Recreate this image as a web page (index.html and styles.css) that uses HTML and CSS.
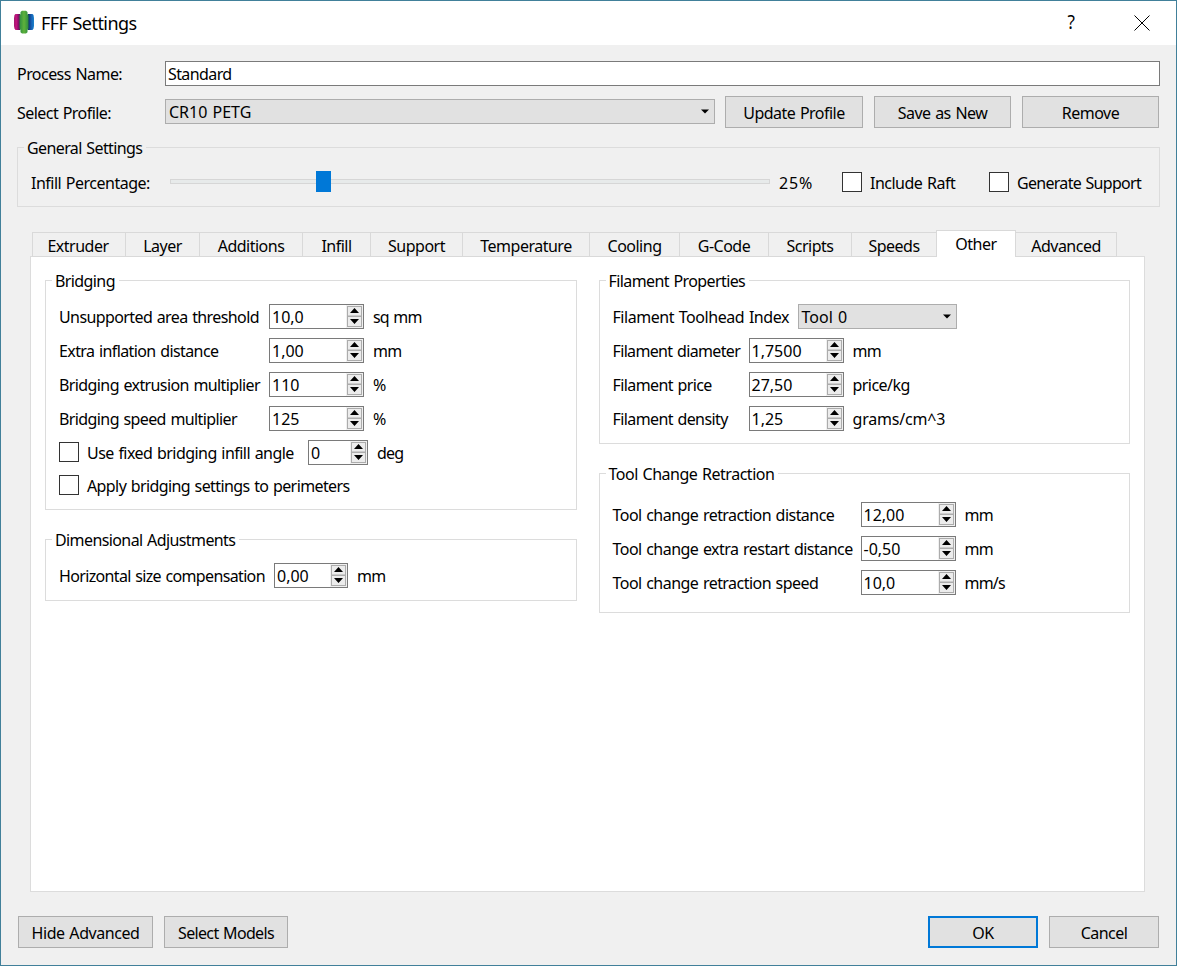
FILE: index.html
```html
<!DOCTYPE html>
<html lang="en">
<head>
<meta charset="utf-8">
<title>FFF Settings</title>
<link rel="stylesheet" href="styles.css">
</head>
<body>
<svg width="0" height="0" class="defs" aria-hidden="true">
  <symbol id="spin" viewBox="0 0 17 23">
    <rect width="17" height="23" fill="#f0f0f0"/>
    <rect x="1.5" y="1.5" width="14" height="9.5" fill="#ececec" stroke="#acacac"/>
    <rect x="1.5" y="11.5" width="14" height="10" fill="#ececec" stroke="#acacac"/>
    <path d="M4 8 L8.5 3 L13 8 Z M4 14 H13 L8.5 19 Z" fill="#000"/>
  </symbol>
  <symbol id="arrow" viewBox="0 0 8 5"><path d="M0 .5 H8 L4 4.5 Z" fill="#000"/></symbol>
</svg>
<main class="window">
  <header class="titlebar">
    <svg class="logo" viewBox="0 0 21 24">
      <defs>
        <linearGradient id="lp"><stop offset="0" stop-color="#a01a70"/><stop offset=".4" stop-color="#c4137d"/><stop offset="1" stop-color="#54105a"/></linearGradient>
        <linearGradient id="lg"><stop offset="0" stop-color="#2c8b42"/><stop offset=".5" stop-color="#5fb23a"/><stop offset="1" stop-color="#2c8b42"/></linearGradient>
        <linearGradient id="lb"><stop offset="0" stop-color="#10265f"/><stop offset=".55" stop-color="#1760b4"/><stop offset="1" stop-color="#1b83cc"/></linearGradient>
      </defs>
      <path d="M1.500 4H6v16H1.500L.5 18.500 0 16V8L.5 5z" fill="url(#lp)"/>
      <path d="M14 4h4.500l1 1 .5 3v8l-.5 2.500-1 1.500H14z" fill="url(#lb)"/>
      <path d="M8 .8h4L13.500 2v2l1 1.500v13l-1 1.500v2.200L12 23.400H8L6.500 22.200V20l-1-1.500v-13l1-1.500V2z" fill="url(#lg)"/>
    </svg>
    <h1 class="title">FFF Settings</h1>
    <span class="help">?</span>
    <svg class="close" viewBox="0 0 16 16"><path d="M.5 .5 L15.500 15.500 M15.500 .5 L.5 15.500" stroke="#000" fill="none"/></svg>
  </header>

  <section class="profile">
    <span class="label">Process Name:</span>
    <div class="input">Standard</div>
    <span class="label">Select Profile:</span>
    <div class="profile-row">
      <div class="combo">CR10 PETG<svg class="arrow"><use href="#arrow"/></svg></div>
      <button class="btn update">Update Profile</button>
      <button class="btn">Save as New</button>
      <button class="btn">Remove</button>
    </div>
  </section>

  <fieldset class="group general">
    <legend>General Settings</legend>
    <div class="general-row">
      <span class="infill">Infill Percentage:</span>
      <div class="slider"><div class="track"></div><div class="thumb"></div></div>
      <span class="percent">25%</span>
      <i class="check"></i><span class="raft">Include Raft</span>
      <i class="check"></i><span class="support">Generate Support</span>
    </div>
  </fieldset>

  <nav class="tabs">
    <span class="tab t1">Extruder</span><span class="tab t2">Layer</span><span class="tab t3">Additions</span><span class="tab t4">Infill</span><span class="tab t5">Support</span><span class="tab t6">Temperature</span><span class="tab t7">Cooling</span><span class="tab t8">G-Code</span><span class="tab t9">Scripts</span><span class="tab t10">Speeds</span><span class="tab t11 selected">Other</span><span class="tab t12">Advanced</span>
  </nav>

  <section class="pane">
    <div class="column">
      <fieldset class="group bridging">
        <legend>Bridging</legend>
        <div class="rows c-bridge">
          <div class="row"><span class="name">Unsupported area threshold</span><div class="spin">10,0<svg><use href="#spin"/></svg></div><span class="unit">sq mm</span></div>
          <div class="row"><span class="name">Extra inflation distance</span><div class="spin">1,00<svg><use href="#spin"/></svg></div><span class="unit">mm</span></div>
          <div class="row"><span class="name">Bridging extrusion multiplier</span><div class="spin">110<svg><use href="#spin"/></svg></div><span class="unit">%</span></div>
          <div class="row"><span class="name">Bridging speed multiplier</span><div class="spin">125<svg><use href="#spin"/></svg></div><span class="unit">%</span></div>
          <div class="row"><i class="check"></i><span class="name angle">Use fixed bridging infill angle</span><div class="spin small">0<svg><use href="#spin"/></svg></div><span class="unit">deg</span></div>
          <div class="row last"><i class="check"></i><span class="name perimeters">Apply bridging settings to perimeters</span></div>
        </div>
      </fieldset>
      <fieldset class="group dimensional">
        <legend>Dimensional Adjustments</legend>
        <div class="rows c-dim">
          <div class="row"><span class="name">Horizontal size compensation</span><div class="spin medium">0,00<svg><use href="#spin"/></svg></div><span class="unit">mm</span></div>
        </div>
      </fieldset>
    </div>
    <div class="column">
      <fieldset class="group filament">
        <legend>Filament Properties</legend>
        <div class="rows c-fil">
          <div class="row"><span class="name index">Filament Toolhead Index</span><div class="combo tool">Tool 0<svg class="arrow"><use href="#arrow"/></svg></div></div>
          <div class="row"><span class="name diameter">Filament diameter</span><div class="spin">1,7500<svg><use href="#spin"/></svg></div><span class="unit">mm</span></div>
          <div class="row"><span class="name">Filament price</span><div class="spin">27,50<svg><use href="#spin"/></svg></div><span class="unit price">price/kg</span></div>
          <div class="row"><span class="name">Filament density</span><div class="spin">1,25<svg><use href="#spin"/></svg></div><span class="unit density">grams/cm^3</span></div>
        </div>
      </fieldset>
      <fieldset class="group retraction">
        <legend class="wide">Tool Change Retraction</legend>
        <div class="rows c-ret">
          <div class="row"><span class="name">Tool change retraction distance</span><div class="spin">12,00<svg><use href="#spin"/></svg></div><span class="unit">mm</span></div>
          <div class="row"><span class="name">Tool change extra restart distance</span><div class="spin">-0,50<svg><use href="#spin"/></svg></div><span class="unit">mm</span></div>
          <div class="row"><span class="name">Tool change retraction speed</span><div class="spin">10,0<svg><use href="#spin"/></svg></div><span class="unit">mm/s</span></div>
        </div>
      </fieldset>
    </div>
  </section>

  <footer class="footer">
    <button class="btn hide">Hide Advanced</button>
    <button class="btn models">Select Models</button>
    <button class="btn ok">OK</button>
    <button class="btn cancel">Cancel</button>
  </footer>
</main>
</body>
</html>
```
FILE: styles.css
```css
* { box-sizing: border-box; }
body {
  margin: 0;
  font: 16px/25px "Noto Sans", "DejaVu Sans Condensed", sans-serif;
  letter-spacing: -0.6px;
  word-spacing: 1px;
  color: #000;
}
.defs { display: block; }
.window {
  width: 1177px;
  height: 966px;
  border: 1px solid #41809a;
  background: #f0f0f0;
  display: flex;
  flex-direction: column;
  white-space: nowrap;
}
.titlebar {
  height: 44px;
  flex: none;
  background: #fff;
  display: flex;
  align-items: center;
  padding: 0 26px 0 13px;
}
.logo { width: 21px; height: 24px; margin: 0 6px 2px 0; }
.title { flex: 1; margin: 0; font-size: 18px; font-weight: 400; letter-spacing: -0.55px; padding-top: 1px; }
.help { font-size: 19px; margin-right: 59px; margin-top: -1px; transform: scaleX(.9); }
.close { width: 16px; height: 16px; margin-bottom: 1px; }
.profile {
  display: grid;
  grid-template-columns: 148px 995px;
  grid-template-rows: 25px 32px;
  row-gap: 10px;
  padding: 16px 0 0 16px;
  align-items: center;
}
.label { padding-top: 2px; letter-spacing: -0.55px; }
.input { height: 25px; border: 1px solid #7a7a7a; background: #fff; padding-left: 2px; line-height: 25px; }
.profile-row { display: flex; gap: 11px; align-items: center; }
.combo {
  display: flex;
  align-items: center;
  justify-content: space-between;
  width: 550px;
  height: 25px;
  border: 1px solid #adadad;
  background: #e1e1e1;
  padding: 0 5px 0 3px;
  line-height: 23px;
  letter-spacing: 0;
}
.combo::first-line { line-height: 27px; }
.profile-row .combo { margin: 0 -1px 1px 0; padding-top: 2px; }
.arrow { width: 8px; height: 5px; margin-top: -2px; }
.btn {
  font: inherit;
  letter-spacing: -0.53px;
  word-spacing: inherit;
  color: #000;
  width: 137px;
  height: 32px;
  border: 1px solid #adadad;
  background: #e1e1e1;
  padding: 3px 0 0;
}
.update { width: 138px; }
.group { margin: 0; padding: 0; border: 1px solid #dcdcdc; min-width: 0; }
.group legend { margin-left: 6px; padding: 0 4px 0 3px; height: 21px; line-height: 23px; }
.group .wide { letter-spacing: -0.48px; }
.general { width: 1143px; height: 70px; margin: 9px 0 0 16px; }
.general-row { display: flex; align-items: center; height: 50px; padding: 0 0 0 13px; margin-top: -1px; }
.general-row span { padding-top: 2px; }
.infill { width: 139px; letter-spacing: -0.5px; }
.slider { width: 600px; height: 21px; position: relative; margin-top: -2px; }
.track { margin-top: 8px; height: 5px; border: 1px solid #d6d6d6; background: #e7eaea; }
.thumb { position: absolute; left: 146px; top: 0; width: 15px; height: 21px; background: #0078d7; }
.percent { flex: none; width: 63px; margin-left: 9px; letter-spacing: 0.8px; }
.check { flex: none; width: 20px; height: 20px; border: 1px solid #333; background: #fff; margin-top: -1px; }
.raft { width: 119px; margin-left: 8px; letter-spacing: -0.5px; }
.support { margin-left: 8px; letter-spacing: -0.7px; }
.tabs { display: flex; height: 27px; margin: 23px 0 -1px 31px; align-items: flex-end; position: relative; }
.tab {
  height: 25px;
  border: 1px solid #d9d9d9;
  border-left: 0;
  text-align: center;
  line-height: 27px;
  letter-spacing: -0.5px;
}
.t1 { width: 94px; border-left: 1px solid #d9d9d9; padding-right: 2px; }
.t2 { width: 74px; }
.t3 { width: 103px; }
.t4 { width: 68px; }
.t5 { width: 92px; }
.t6 { width: 127px; }
.t7 { width: 90px; }
.t8 { width: 89px; }
.t9 { width: 83px; }
.t10 { width: 84px; border-right: 0; }
.t11 { width: 80px; }
.t12 { width: 101px; }
.selected { height: 27px; background: #fff; border-left: 1px solid #d9d9d9; border-bottom: 0; line-height: 27px; }
.pane {
  width: 1115px;
  height: 636px;
  margin-left: 29px;
  border: 1px solid #dcdcdc;
  background: #fff;
  display: flex;
  gap: 22px;
  padding: 13px 14px;
}
.column { flex: 1; }
.bridging { height: 240px; }
.dimensional { height: 72px; margin-top: 19px; }
.filament { height: 174px; }
.retraction { height: 150px; margin-top: 19px; }
.rows { display: flex; flex-direction: column; gap: 9px; padding: 13px 0 0 13px; }
.row { display: flex; align-items: center; height: 25px; }
.row.last { height: 23px; }
.c-ret { padding-top: 18px; }
.name { flex: none; padding-top: 2px; }
.unit { padding-top: 2px; letter-spacing: -0.8px; }
.price { letter-spacing: -0.55px; }
.density { letter-spacing: -0.2px; }
.c-bridge .name { width: 210px; }
.c-bridge .angle { width: 221px; margin-left: 8px; letter-spacing: -0.54px; }
.c-bridge .perimeters { margin-left: 8px; letter-spacing: -0.6px; }
.c-dim .name { width: 215px; letter-spacing: -0.65px; }
.c-fil .name { width: 136px; }
.c-fil .diameter { letter-spacing: -0.65px; }
.c-fil .index { width: 185px; letter-spacing: -0.45px; }
.c-ret .name { width: 248px; letter-spacing: -0.54px; }
.spin {
  display: flex;
  justify-content: space-between;
  width: 95px;
  height: 25px;
  border: 1px solid #7a7a7a;
  background: #fff;
  padding-left: 2px;
  line-height: 25px;
  margin-right: 9px;
  letter-spacing: 0;
}
.spin svg { width: 17px; height: 23px; }
.small { width: 60px; }
.medium { width: 74px; }
.tool { width: 159px; padding-top: 2px; }
.footer { display: flex; margin: 24px 0 0 17px; width: 1141px; gap: 11px; }
.hide { width: 135px; letter-spacing: -0.45px; }
.models { width: 124px; letter-spacing: -0.65px; }
.ok { width: 110px; margin-left: auto; border: 2px solid #0078d7; }
.cancel { width: 110px; }
```
